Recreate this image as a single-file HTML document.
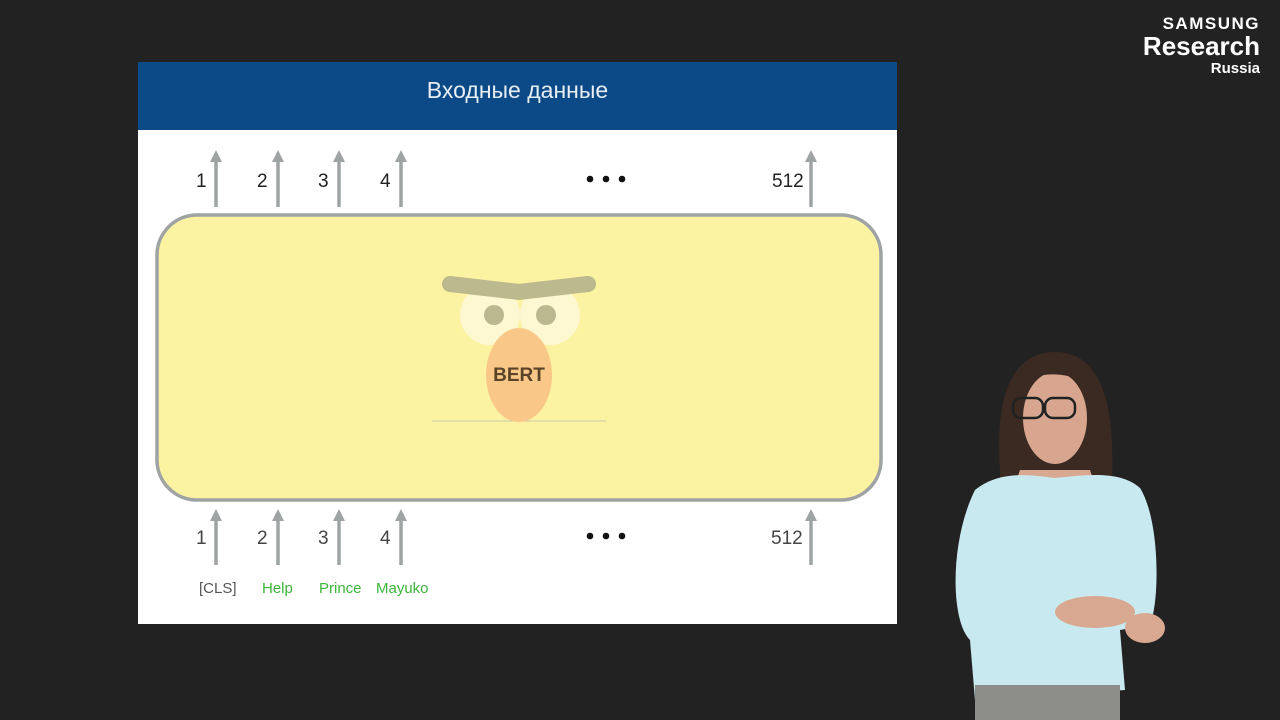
<html><head><style>
body{margin:0;background:#222222;width:1280px;height:720px;position:relative;overflow:hidden;font-family:"Liberation Sans","DejaVu Sans",sans-serif}
.a{position:absolute}
</style></head><body>
<div class="a" style="left:138px;top:62px;width:759px;height:562px;background:#fff"></div>
<div class="a" style="left:138px;top:62px;width:759px;height:68px;background:#0b4a86;color:#e8eef5;font-size:23px;text-align:center;line-height:56px">Входные данные</div>
<svg class="a" style="left:0;top:0" width="1280" height="720">
<rect x="157" y="215" width="724" height="285" rx="40" fill="#fbf2a2" stroke="#9fa3a3" stroke-width="3.5"/>
<g stroke="#9ea3a3" stroke-width="3.5" fill="#9ea3a3">
<line x1="216" y1="160" x2="216" y2="207"/><polygon points="210,162 222,162 216,150" stroke="none"/>
<line x1="278" y1="160" x2="278" y2="207"/><polygon points="272,162 284,162 278,150" stroke="none"/>
<line x1="339" y1="160" x2="339" y2="207"/><polygon points="333,162 345,162 339,150" stroke="none"/>
<line x1="401" y1="160" x2="401" y2="207"/><polygon points="395,162 407,162 401,150" stroke="none"/>
<line x1="811" y1="160" x2="811" y2="207"/><polygon points="805,162 817,162 811,150" stroke="none"/>
<line x1="216" y1="519" x2="216" y2="565"/><polygon points="210,521 222,521 216,509" stroke="none"/>
<line x1="278" y1="519" x2="278" y2="565"/><polygon points="272,521 284,521 278,509" stroke="none"/>
<line x1="339" y1="519" x2="339" y2="565"/><polygon points="333,521 345,521 339,509" stroke="none"/>
<line x1="401" y1="519" x2="401" y2="565"/><polygon points="395,521 407,521 401,509" stroke="none"/>
<line x1="811" y1="519" x2="811" y2="565"/><polygon points="805,521 817,521 811,509" stroke="none"/>
</g>
<g font-size="19" fill="#222">
<text x="196" y="187">1</text><text x="257" y="187">2</text><text x="318" y="187">3</text><text x="380" y="187">4</text><text x="772" y="187">512</text>
<text x="196" y="544" fill="#444">1</text><text x="257" y="544" fill="#444">2</text><text x="318" y="544" fill="#444">3</text><text x="380" y="544" fill="#444">4</text><text x="771" y="544" fill="#444">512</text>
</g>
<g fill="#111"><circle cx="590" cy="179" r="3.3"/><circle cx="606" cy="179" r="3.3"/><circle cx="622" cy="179" r="3.3"/>
<circle cx="590" cy="536" r="3.3"/><circle cx="606" cy="536" r="3.3"/><circle cx="622" cy="536" r="3.3"/></g>
<g font-size="15"><text x="199" y="593" fill="#555">[CLS]</text><text x="262" y="593" fill="#3cb43c">Help</text><text x="319" y="593" fill="#3cb43c">Prince</text><text x="376" y="593" fill="#3cb43c">Mayuko</text></g>
<circle cx="490" cy="315" r="30" fill="#fdf7d2"/><circle cx="550" cy="315" r="30" fill="#fdf7d2"/>
<circle cx="494" cy="315" r="10" fill="#bbb78e"/><circle cx="546" cy="315" r="10" fill="#bbb78e"/>
<polyline points="450,284 519,292 588,284" fill="none" stroke="#bcb98e" stroke-width="16" stroke-linecap="round"/>
<line x1="432" y1="421" x2="606" y2="421" stroke="#c8c9a8" stroke-width="1"/>
<ellipse cx="519" cy="375" rx="33" ry="47" fill="#f9c889"/>
<text x="519" y="381" font-size="19" font-weight="bold" fill="#5a4326" text-anchor="middle">BERT</text>
<!-- person -->
<path d="M1000,470 C995,400 1010,352 1055,352 C1100,352 1115,400 1112,480 L1000,480Z" fill="#3a2a22"/>
<path d="M1020,470 L1090,470 L1095,485 L1015,485Z" fill="#d9a890"/>
<ellipse cx="1055" cy="418" rx="32" ry="46" fill="#d8a68e"/>
<rect x="1013" y="398" width="30" height="20" rx="8" fill="none" stroke="#222" stroke-width="2.5"/>
<rect x="1045" y="398" width="30" height="20" rx="8" fill="none" stroke="#222" stroke-width="2.5"/>
<path d="M1010,400 C1015,365 1095,365 1100,405 L1095,380 C1080,360 1030,360 1015,385Z" fill="#3a2a22"/>
<path d="M975,490 C1000,470 1030,475 1055,478 C1085,475 1120,470 1140,488 C1160,520 1160,600 1150,625 L1120,630 L1125,690 L975,700 L970,640 C950,620 950,540 975,490Z" fill="#c9e9f1"/>
<rect x="975" y="685" width="145" height="35" fill="#8c8c88"/>
<ellipse cx="1095" cy="612" rx="40" ry="16" fill="#d9a890"/>
<ellipse cx="1145" cy="628" rx="20" ry="15" fill="#d9a890"/>
</svg>
<div class="a" style="right:20px;top:15px;color:#fff;text-align:right;font-weight:bold;line-height:1">
<div style="font-size:17px;letter-spacing:1.5px">SAMSUNG</div>
<div style="font-size:26px;margin-top:1px">Research</div>
<div style="font-size:15px;margin-top:2px">Russia</div>
</div>
</body></html>
